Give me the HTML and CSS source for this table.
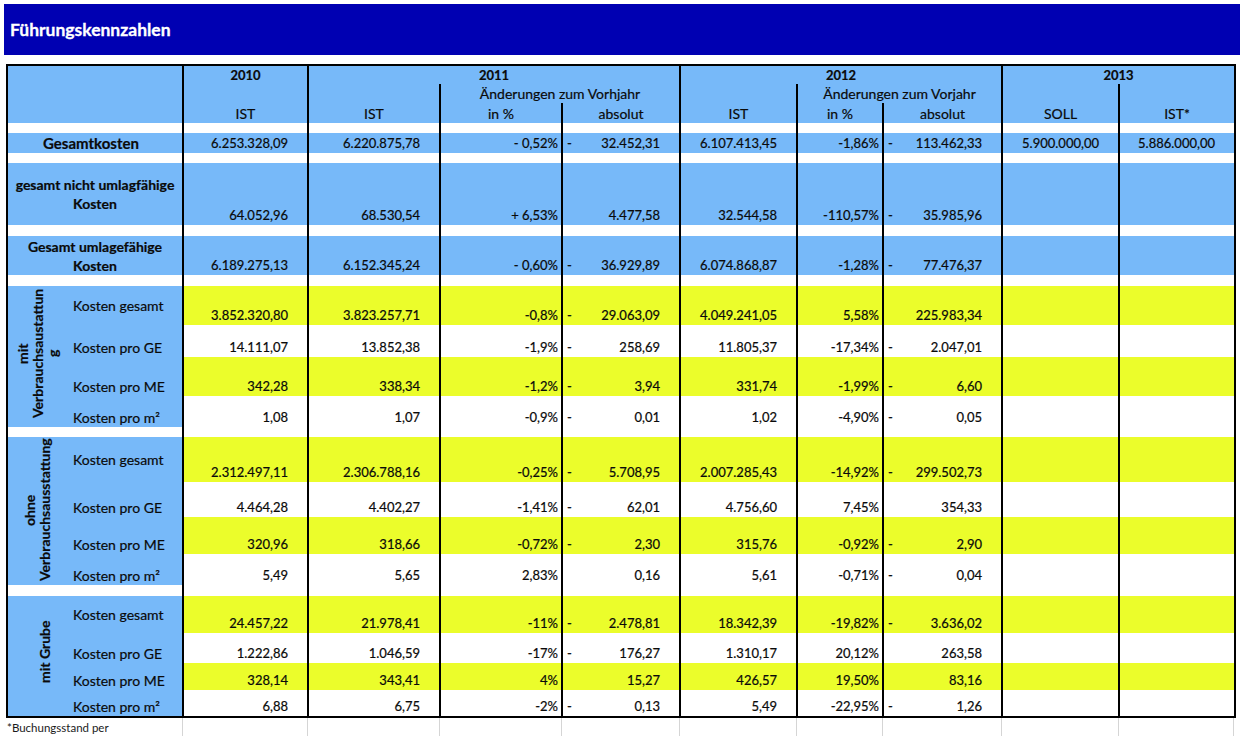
FILE: index.html
```html
<!DOCTYPE html>
<html lang="de">
<head>
<meta charset="utf-8">
<title>Führungskennzahlen</title>
<link rel="stylesheet" href="styles.css">
</head>
<body>
<div class="titlebar">Führungskennzahlen</div>

<div class="sheet">
  <!-- header row 1 -->
  <div class="row rb">
    <div class="c corner"></div>
    <div class="c bl hd yr">2010</div>
    <div class="c bl hd yr s3">2011</div>
    <div class="c bl hd yr s3">2012</div>
    <div class="c bl hd yr s2">2013</div>
  </div>
  <!-- header row 2 -->
  <div class="row rb">
    <div class="c bl"></div>
    <div class="c bl"></div>
    <div class="c bl hd s2">Änderungen zum Vorhjahr</div>
    <div class="c bl"></div>
    <div class="c bl hd s2">Änderungen zum Vorjahr</div>
    <div class="c bl"></div>
    <div class="c bl"></div>
  </div>
  <!-- header row 3 -->
  <div class="row rb">
    <div class="c bl hd">IST</div>
    <div class="c bl hd">IST</div>
    <div class="c bl hd">in %</div>
    <div class="c bl hd">absolut</div>
    <div class="c bl hd">IST</div>
    <div class="c bl hd">in %</div>
    <div class="c bl hd">absolut</div>
    <div class="c bl hd">SOLL</div>
    <div class="c bl hd">IST*</div>
  </div>

  <div class="row gap">
    <div class="c s2"></div><div class="c bl"></div><div class="c bl"></div><div class="c bl"></div><div class="c bl"></div><div class="c bl"></div><div class="c bl"></div><div class="c bl"></div><div class="c bl"></div><div class="c bl"></div>
  </div>

  <!-- Gesamtkosten -->
  <div class="row rb mid">
    <div class="c s2 tl big">Gesamtkosten</div>
    <div class="c bl n">6.253.328,09</div>
    <div class="c bl n">6.220.875,78</div>
    <div class="c bl p">- 0,52%</div>
    <div class="c bl a"><span class="dash">-</span>32.452,31</div>
    <div class="c bl n">6.107.413,45</div>
    <div class="c bl p">-1,86%</div>
    <div class="c bl a"><span class="dash">-</span>113.462,33</div>
    <div class="c bl n">5.900.000,00</div>
    <div class="c bl n">5.886.000,00</div>
  </div>

  <div class="row gap">
    <div class="c s2"></div><div class="c bl"></div><div class="c bl"></div><div class="c bl"></div><div class="c bl"></div><div class="c bl"></div><div class="c bl"></div><div class="c bl"></div><div class="c bl"></div><div class="c bl"></div>
  </div>

  <!-- nicht umlagfähige -->
  <div class="row rb">
    <div class="c s2 tl">gesamt nicht umlagfähige<br>Kosten</div>
    <div class="c bl n">64.052,96</div>
    <div class="c bl n">68.530,54</div>
    <div class="c bl p">+ 6,53%</div>
    <div class="c bl a">4.477,58</div>
    <div class="c bl n">32.544,58</div>
    <div class="c bl p">-110,57%</div>
    <div class="c bl a"><span class="dash">-</span>35.985,96</div>
    <div class="c bl n"></div>
    <div class="c bl n"></div>
  </div>

  <div class="row gap">
    <div class="c s2"></div><div class="c bl"></div><div class="c bl"></div><div class="c bl"></div><div class="c bl"></div><div class="c bl"></div><div class="c bl"></div><div class="c bl"></div><div class="c bl"></div><div class="c bl"></div>
  </div>

  <!-- umlagefähige -->
  <div class="row rb">
    <div class="c s2 tl">Gesamt umlagefähige<br>Kosten</div>
    <div class="c bl n">6.189.275,13</div>
    <div class="c bl n">6.152.345,24</div>
    <div class="c bl p">- 0,60%</div>
    <div class="c bl a"><span class="dash">-</span>36.929,89</div>
    <div class="c bl n">6.074.868,87</div>
    <div class="c bl p">-1,28%</div>
    <div class="c bl a"><span class="dash">-</span>77.476,37</div>
    <div class="c bl n"></div>
    <div class="c bl n"></div>
  </div>

  <div class="row gap">
    <div class="c s2"></div><div class="c bl"></div><div class="c bl"></div><div class="c bl"></div><div class="c bl"></div><div class="c bl"></div><div class="c bl"></div><div class="c bl"></div><div class="c bl"></div><div class="c bl"></div>
  </div>

  <!-- mit Verbrauchsausstattung -->
  <div class="row ry">
    <div class="c grp g-mit"><span>mit<br>Verbrauchsaustattun<br>g</span></div>
    <div class="c lab lm">Kosten gesamt</div>
    <div class="c bl n">3.852.320,80</div>
    <div class="c bl n">3.823.257,71</div>
    <div class="c bl p">-0,8%</div>
    <div class="c bl a"><span class="dash">-</span>29.063,09</div>
    <div class="c bl n">4.049.241,05</div>
    <div class="c bl p">5,58%</div>
    <div class="c bl a">225.983,34</div>
    <div class="c bl n"></div>
    <div class="c bl n"></div>
  </div>
  <div class="row rw">
    <div class="c lab">Kosten pro GE</div>
    <div class="c bl n">14.111,07</div>
    <div class="c bl n">13.852,38</div>
    <div class="c bl p">-1,9%</div>
    <div class="c bl a"><span class="dash">-</span>258,69</div>
    <div class="c bl n">11.805,37</div>
    <div class="c bl p">-17,34%</div>
    <div class="c bl a"><span class="dash">-</span>2.047,01</div>
    <div class="c bl n"></div>
    <div class="c bl n"></div>
  </div>
  <div class="row ry">
    <div class="c lab">Kosten pro ME</div>
    <div class="c bl n">342,28</div>
    <div class="c bl n">338,34</div>
    <div class="c bl p">-1,2%</div>
    <div class="c bl a"><span class="dash">-</span>3,94</div>
    <div class="c bl n">331,74</div>
    <div class="c bl p">-1,99%</div>
    <div class="c bl a"><span class="dash">-</span>6,60</div>
    <div class="c bl n"></div>
    <div class="c bl n"></div>
  </div>
  <div class="row rw">
    <div class="c lab">Kosten pro m²</div>
    <div class="c bl n">1,08</div>
    <div class="c bl n">1,07</div>
    <div class="c bl p">-0,9%</div>
    <div class="c bl a"><span class="dash">-</span>0,01</div>
    <div class="c bl n">1,02</div>
    <div class="c bl p">-4,90%</div>
    <div class="c bl a"><span class="dash">-</span>0,05</div>
    <div class="c bl n"></div>
    <div class="c bl n"></div>
  </div>

  <div class="row gap">
    <div class="c s2"></div><div class="c bl"></div><div class="c bl"></div><div class="c bl"></div><div class="c bl"></div><div class="c bl"></div><div class="c bl"></div><div class="c bl"></div><div class="c bl"></div><div class="c bl"></div>
  </div>

  <!-- ohne Verbrauchsausstattung -->
  <div class="row ry">
    <div class="c grp g-ohne"><span>ohne<br>Verbrauchsausstattung</span></div>
    <div class="c lab lm">Kosten gesamt</div>
    <div class="c bl n">2.312.497,11</div>
    <div class="c bl n">2.306.788,16</div>
    <div class="c bl p">-0,25%</div>
    <div class="c bl a"><span class="dash">-</span>5.708,95</div>
    <div class="c bl n">2.007.285,43</div>
    <div class="c bl p">-14,92%</div>
    <div class="c bl a"><span class="dash">-</span>299.502,73</div>
    <div class="c bl n"></div>
    <div class="c bl n"></div>
  </div>
  <div class="row rw">
    <div class="c lab">Kosten pro GE</div>
    <div class="c bl n">4.464,28</div>
    <div class="c bl n">4.402,27</div>
    <div class="c bl p">-1,41%</div>
    <div class="c bl a"><span class="dash">-</span>62,01</div>
    <div class="c bl n">4.756,60</div>
    <div class="c bl p">7,45%</div>
    <div class="c bl a">354,33</div>
    <div class="c bl n"></div>
    <div class="c bl n"></div>
  </div>
  <div class="row ry">
    <div class="c lab">Kosten pro ME</div>
    <div class="c bl n">320,96</div>
    <div class="c bl n">318,66</div>
    <div class="c bl p">-0,72%</div>
    <div class="c bl a"><span class="dash">-</span>2,30</div>
    <div class="c bl n">315,76</div>
    <div class="c bl p">-0,92%</div>
    <div class="c bl a"><span class="dash">-</span>2,90</div>
    <div class="c bl n"></div>
    <div class="c bl n"></div>
  </div>
  <div class="row rw">
    <div class="c lab">Kosten pro m²</div>
    <div class="c bl n">5,49</div>
    <div class="c bl n">5,65</div>
    <div class="c bl p">2,83%</div>
    <div class="c bl a">0,16</div>
    <div class="c bl n">5,61</div>
    <div class="c bl p">-0,71%</div>
    <div class="c bl a"><span class="dash">-</span>0,04</div>
    <div class="c bl n"></div>
    <div class="c bl n"></div>
  </div>

  <div class="row gap">
    <div class="c s2"></div><div class="c bl"></div><div class="c bl"></div><div class="c bl"></div><div class="c bl"></div><div class="c bl"></div><div class="c bl"></div><div class="c bl"></div><div class="c bl"></div><div class="c bl"></div>
  </div>

  <!-- mit Grube -->
  <div class="row ry">
    <div class="c grp g-grube"><span>mit Grube</span></div>
    <div class="c lab lm">Kosten gesamt</div>
    <div class="c bl n">24.457,22</div>
    <div class="c bl n">21.978,41</div>
    <div class="c bl p">-11%</div>
    <div class="c bl a"><span class="dash">-</span>2.478,81</div>
    <div class="c bl n">18.342,39</div>
    <div class="c bl p">-19,82%</div>
    <div class="c bl a"><span class="dash">-</span>3.636,02</div>
    <div class="c bl n"></div>
    <div class="c bl n"></div>
  </div>
  <div class="row rw">
    <div class="c lab">Kosten pro GE</div>
    <div class="c bl n">1.222,86</div>
    <div class="c bl n">1.046,59</div>
    <div class="c bl p">-17%</div>
    <div class="c bl a"><span class="dash">-</span>176,27</div>
    <div class="c bl n">1.310,17</div>
    <div class="c bl p">20,12%</div>
    <div class="c bl a">263,58</div>
    <div class="c bl n"></div>
    <div class="c bl n"></div>
  </div>
  <div class="row ry">
    <div class="c lab">Kosten pro ME</div>
    <div class="c bl n">328,14</div>
    <div class="c bl n">343,41</div>
    <div class="c bl p">4%</div>
    <div class="c bl a">15,27</div>
    <div class="c bl n">426,57</div>
    <div class="c bl p">19,50%</div>
    <div class="c bl a">83,16</div>
    <div class="c bl n"></div>
    <div class="c bl n"></div>
  </div>
  <div class="row rw">
    <div class="c lab">Kosten pro m²</div>
    <div class="c bl n">6,88</div>
    <div class="c bl n">6,75</div>
    <div class="c bl p">-2%</div>
    <div class="c bl a"><span class="dash">-</span>0,13</div>
    <div class="c bl n">5,49</div>
    <div class="c bl p">-22,95%</div>
    <div class="c bl a"><span class="dash">-</span>1,26</div>
    <div class="c bl n"></div>
    <div class="c bl n"></div>
  </div>
</div>

<div class="foot">
  <div class="fc s2 note">*Buchungsstand per</div>
  <div class="fc gl"></div><div class="fc gl"></div><div class="fc gl"></div><div class="fc gl"></div><div class="fc gl"></div><div class="fc gl"></div><div class="fc gl"></div><div class="fc gl"></div><div class="fc gl gr"></div>
</div>
</body>
</html>
```

FILE: styles.css
```css
:root {
  --blue: #77b9f9;
  --yellow: #ebfd2b;
  --navy: #0000b2;
  --ink: #0a0a0a;
}

html, body {
  margin: 0;
  padding: 0;
  background: #ffffff;
}

body {
  font-family: Lato, "Liberation Sans", sans-serif;
  color: var(--ink);
}

.titlebar {
  margin: 4px 0 0 4px;
  height: 51px;
  background: var(--navy);
  color: #ffffff;
  font-weight: 700;
  font-size: 17.5px;
  display: flex;
  align-items: center;
  padding-left: 6px;
  -webkit-text-stroke: 0.3px #ffffff;
}

.sheet {
  display: grid;
  grid-template-columns: 58px 116px 125px 132px 122px 118px 117px 86px 119px 117px 116px;
  grid-template-rows: 18px 19px 20px 10px 20px 10px 62px 11px 39px 11px 39px 32px 39px 31px 10px 45px 35px 37px 31px 11px 37px 30px 27px 26px;
  width: max-content;
  border: 2px solid #000;
  margin: 9px 0 0 6px;
}

.row {
  display: contents;
}

.c {
  display: flex;
  align-items: flex-end;
  justify-content: flex-end;
  white-space: nowrap;
  font-size: 13px;
  line-height: 19px;
  min-width: 0;
  background: #ffffff;
  -webkit-text-stroke: 0.2px var(--ink);
}

.rb > .c { background: var(--blue); }
.ry > .c { background: var(--yellow); }
.rw > .c { background: #ffffff; }
.gap > .c { background: #ffffff; }

.mid > .c { align-items: center; }

.bl { border-left: 2px solid #000; }

.s2 { grid-column: span 2; }
.s3 { grid-column: span 3; }

.corner {
  grid-column: span 2;
  grid-row: span 3;
}

.hd {
  justify-content: center;
  align-items: center;
  font-size: 14px;
}

.yr {
  font-weight: 700;
  font-size: 13px;
}

.tl {
  justify-content: center;
  align-items: center;
  text-align: center;
  font-weight: 700;
  font-size: 14px;
  line-height: 19px;
}

.row > .tl.big {
  font-size: 15px;
  padding-right: 8px;
}

.n { padding-right: 19px; }
.p { padding-right: 3px; }
.a { padding: 0 19px 0 4px; }
.dash { margin-right: auto; }

.row > .lab {
  background: var(--blue);
  justify-content: flex-start;
  padding-left: 7px;
  font-size: 14px;
}

.row > .lab.lm { align-items: center; }

.row > .grp {
  grid-row: span 4;
  background: var(--blue);
  writing-mode: vertical-rl;
  transform: rotate(180deg);
  justify-content: center;
  align-items: center;
  text-align: center;
  font-weight: 700;
  font-size: 14px;
  line-height: 15px;
}

.g-mit { padding-top: 6px; }
.g-ohne { padding-top: 2px; }
.g-grube { padding-top: 8px; padding-right: 14px; }

.foot {
  display: grid;
  grid-template-columns: 58px 116px 125px 132px 122px 118px 117px 86px 119px 117px 116px;
  height: 18px;
  margin-left: 8px;
  width: max-content;
}

.fc {
  display: flex;
  align-items: center;
}

.note {
  font-size: 11.5px;
  margin-left: -1px;
  color: #1a1a1a;
}

.gl { border-left: 1px solid #d5d5d5; }
.gr { border-right: 1px solid #d5d5d5; }
```
